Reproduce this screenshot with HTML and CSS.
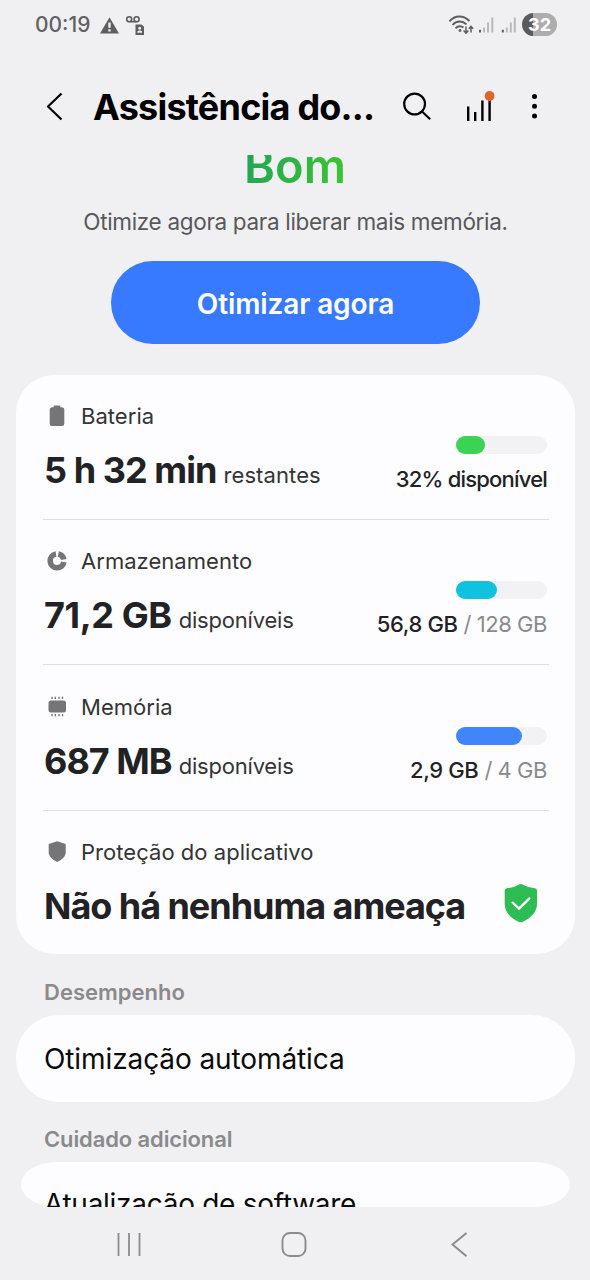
FILE: index.html
```html
<!DOCTYPE html>
<html lang="pt-BR">
<head>
<meta charset="utf-8">
<title>Assistência do dispositivo</title>
<link rel="stylesheet" href="styles.css">
</head>
<body>
<div class="screen">
  <div class="status">
    <span class="clock">00:19</span>
    <svg class="status-left" width="46" height="22" viewBox="0 0 46 22">
      <path fill="#5e5e60" fill-rule="evenodd" d="M9.5 3.2 19 19.500H0ZM8.300 8.500v5.300h2.400V8.500Zm0 6.800v2.300h2.400v-2.300Z"/>
      <g fill="none" stroke="#5e5e60" stroke-width="1.600">
        <circle cx="29.200" cy="5.200" r="2.500"/><circle cx="36.600" cy="5.200" r="2.500"/><path d="M29.200 7.700h7.400"/>
      </g>
      <path fill="#5e5e60" fill-rule="evenodd" d="M35.500 10.500h6l2.500 2.300v8.200h-8.500ZM39.700 12.800a1.500 1.500 0 1 0 .01 0ZM37.400 18.800h4.700v-.8c0-1-1-1.500-2.350-1.500s-2.350.5-2.350 1.500Z"/>
    </svg>
    <div class="status-right">
      <svg width="70" height="24" viewBox="0 0 70 24">
        <g fill="none" stroke="#5e5e60" stroke-width="1.900">
          <path d="M1.500 8.300C7 1.900 15.500 1.900 21.500 8"/><path d="M4.500 12C8.500 7.400 14.500 7.400 18.500 11.400"/><path d="M7.500 15.300C10 12.700 13 12.700 15.500 14.600"/>
        </g>
        <circle cx="12" cy="17.500" r="1.400" fill="#5e5e60"/>
        <g fill="none" stroke="#5e5e60" stroke-width="1.500"><path d="M18 13.500v6.500M15.600 17.600l2.400 2.500 2.400-2.500M23 19.500v-6M20.800 15.700 23 13.400l2.200 2.300"/></g>
        <path fill="#b9b9bb" d="M35 14.500h2V19.500h-2ZM39 9.500h2V19.500h-2ZM43.300 4.500h2V19.500h-2ZM57.800 14.500h2V19.500h-2ZM61.800 9.500h2V19.500h-2ZM65.800 4.500h2V19.500h-2Z"/>
        <path fill="#5e5e60" d="M31 16.700h2v2.800h-2ZM53.800 16.700h2v2.800h-2Z"/>
      </svg>
      <span class="charge">32</span>
    </div>
  </div>

  <header class="header">
    <svg class="back" width="18" height="30" viewBox="0 0 18 30"><path d="M15.500 1.500 2 14.500l13.500 13" fill="none" stroke="#000" stroke-width="2.200" stroke-linejoin="round"/></svg>
    <h1 class="title">Assistência do...</h1>
    <svg class="search" width="30" height="30" viewBox="0 0 30 30"><g fill="none" stroke="#000" stroke-width="2.200"><circle cx="12.600" cy="12" r="10.400"/><path d="m20 19.500 8.200 7.700"/></g></svg>
    <svg class="stats" width="30" height="32" viewBox="0 0 30 32"><path d="M3.200 16.500V31M10.200 22V31M17.400 10.500V31M24.600 8V31" stroke="#000" stroke-width="2.400"/><circle cx="24.600" cy="6" r="4.900" fill="#e0632b"/></svg>
    <svg class="more" width="8" height="28" viewBox="0 0 8 28"><circle cx="3.500" cy="3.500" r="2.500"/><circle cx="3.500" cy="13.200" r="2.500"/><circle cx="3.500" cy="22.900" r="2.500"/></svg>
  </header>

  <main class="scroll">
    <div class="grade"><span class="grade-text">Bom</span></div>
    <p class="hint">Otimize agora para liberar mais memória.</p>
    <button class="optimize">Otimizar agora</button>

    <section class="card">
      <div class="row">
        <div class="info">
          <div class="label"><svg class="icon" width="26" height="24" viewBox="0 0 26 24"><path fill="#757577" d="M10.500 1.500h5a.8.8 0 0 1 .8.800v1h1.500a2.500 2.500 0 0 1 2.500 2.500v14a2.300 2.300 0 0 1-2.300 2.300H8a2.300 2.300 0 0 1-2.300-2.300v-14a2.500 2.500 0 0 1 2.500-2.500h1.500v-1a.8.8 0 0 1 .8-.8Z"/></svg><span class="name">Bateria</span></div>
          <div class="value"><b class="amount time">5 h 32 min</b><span class="unit spread">restantes</span></div>
        </div>
        <div class="usage">
          <div class="bar"><div class="fill green" style="width:32%"></div></div>
          <div class="numbers"><span class="available">32% disponível</span></div>
        </div>
      </div>
      <div class="row">
        <div class="info">
          <div class="label"><svg class="icon" width="26" height="24" viewBox="0 0 26 24"><path d="M12 5.100A6.900 6.900 0 1 0 19.900 13M14.300 5.100A6.900 6.900 0 0 1 19.800 10.600" fill="none" stroke="#757577" stroke-width="5.600"/></svg><span class="name">Armazenamento</span></div>
          <div class="value"><b class="amount storage">71,2 GB</b><span class="unit tight">disponíveis</span></div>
        </div>
        <div class="usage">
          <div class="bar"><div class="fill cyan" style="width:45%"></div></div>
          <div class="numbers"><span class="used">56,8 GB</span><span class="total">/ 128 GB</span></div>
        </div>
      </div>
      <div class="row">
        <div class="info">
          <div class="label"><svg class="icon" width="26" height="24" viewBox="0 0 26 24"><rect x="4.500" y="5.500" width="17.500" height="12" rx="2.500" fill="#757577"/><path d="M8 1.700v2.300M11.300 1.700v2.300M15 1.700v2.300M18.500 1.700v2.300M8 19v2.300M11.300 19v2.300M15 19v2.300M18.500 19v2.300" stroke="#757577" stroke-width="1.400"/></svg><span class="name">Memória</span></div>
          <div class="value"><b class="amount memory">687 MB</b><span class="unit tight">disponíveis</span></div>
        </div>
        <div class="usage">
          <div class="bar"><div class="fill blue" style="width:72.500%"></div></div>
          <div class="numbers"><span class="used">2,9 GB</span><span class="total">/ 4 GB</span></div>
        </div>
      </div>
      <div class="row">
        <div class="info">
          <div class="label"><svg class="icon" width="26" height="24" viewBox="0 0 26 24"><path fill="#757577" d="M13.200 1.300 21.700 4v8.500c0 4-4 7.300-8.500 9.500-4.500-2.200-8.500-5.500-8.500-9.500V4Z"/></svg><span class="name">Proteção do aplicativo</span></div>
          <div class="value"><b class="amount threat">Não há nenhuma ameaça</b></div>
        </div>
        <svg class="shield" width="34" height="40" viewBox="0 0 34 40"><path fill="#2dbd52" d="M16.700 1Q18 1 19 1.700 24 4.700 31 5.300q2 .2 2 2.200V21c0 9-7.500 14.500-14 17.800q-2.300 1-4.500 0C8 35.500.7 30 .7 21V7.500q0-2 2-2.200 7-.6 12-3.600 1-.7 2-.7Z"/><path d="m8 19 7 6.700L26 14.800" fill="none" stroke="#fff" stroke-width="2.400"/></svg>
      </div>
    </section>

    <h2 class="section">Desempenho</h2>
    <div class="item">Otimização automática</div>
    <h2 class="section second">Cuidado adicional</h2>
    <div class="item clipped"><span class="update">Atualização de software</span></div>
  </main>

  <nav class="nav">
    <svg width="28" height="28" viewBox="0 0 28 28"><path d="M3.500 2v23M14 2v23M24.500 2v23" stroke="#8b8b8d" stroke-width="1.800"/></svg>
    <svg width="28" height="28" viewBox="0 0 28 28"><rect x="1.500" y="2" width="23" height="23" rx="7.500" fill="none" stroke="#8b8b8d" stroke-width="1.900"/></svg>
    <svg width="28" height="28" viewBox="0 0 28 28"><path d="M20.500 2 6.500 13.600l14 11.700" fill="none" stroke="#8b8b8d" stroke-width="1.900"/></svg>
  </nav>
</div>
</body>
</html>
```
FILE: styles.css
```css
* { box-sizing: border-box; }
body {
  margin: 0;
  background: #f0f0f2;
  font-family: Inter, "Liberation Sans", sans-serif;
  color: #222224;
}
svg { display: block; flex: none; }
h1, h2, p { margin: 0; }

.screen {
  width: 590px;
  height: 1280px;
  display: flex;
  flex-direction: column;
  overflow: hidden;
  white-space: nowrap;
}

.status {
  flex: none;
  height: 49px;
  padding: 0 33px 0 35px;
  display: flex;
  align-items: center;
}
.clock { font-size: 21px; font-weight: 500; color: #626264; width: 55px; }
.status-left { margin-left: 10px; }
.status-right { margin-left: auto; display: flex; align-items: center; gap: 4px; }
.charge {
  width: 35px;
  height: 23px;
  border-radius: 12px;
  background: linear-gradient(90deg, #5b5b5d 32%, #adadaf 32%);
  color: #fff;
  font-size: 18px;
  font-weight: 700;
  line-height: 23px;
  text-align: center;
}

.header {
  flex: none;
  height: 106px;
  padding: 10px 51px 0 46px;
  display: flex;
  align-items: center;
}
.title {
  width: 281px;
  margin-left: 29px;
  font-size: 36px;
  font-weight: 700;
  letter-spacing: -0.78px;
  color: #000;
}
.search { margin-left: 28px; }
.stats { margin: 0 0 3px 33px; }
.more { margin-left: auto; }

.scroll { flex: none; height: 1052px; overflow: hidden; }
.grade {
  margin-top: -17px;
  height: 56px;
  line-height: 56px;
  text-align: center;
}
.grade-text {
  display: inline-block;
  font-size: 47px;
  font-weight: 600;
  background: linear-gradient(100deg, #22a455, #3cc62f);
  -webkit-background-clip: text;
  background-clip: text;
  color: transparent;
}
.hint {
  margin-top: 13px;
  font-size: 22.5px;
  line-height: 30px;
  letter-spacing: -0.32px;
  text-align: center;
  padding-left: 1px;
  color: #58585a;
}
.optimize {
  display: block;
  width: 369px;
  height: 83px;
  margin: 24px auto 31px 111px;
  padding: 2px 0 0;
  border: 0;
  border-radius: 42px;
  background: #387aff;
  color: #fff;
  font: 600 28px Inter, "Liberation Sans", sans-serif;
  letter-spacing: -0.12px;
}

.card {
  height: 579px;
  margin: 0 15px 0 16px;
  padding: 0 26px 0 27px;
  border-radius: 38px;
  background: #fdfdff;
}
.row {
  height: 145.5px;
  padding: 26px 2px 0 1px;
  display: flex;
  justify-content: space-between;
  border-bottom: 1px solid #dfdfe3;
}
.row:first-child { height: 144.5px; }
.row + .row { padding-top: 26.5px; }
.row:last-child { height: 142px; border-bottom: 0; }
.label { display: flex; align-items: center; height: 30px; font-size: 22px; color: #343436; }
.icon { margin-right: 11px; }
.name { letter-spacing: 0.04px; }
.spread { letter-spacing: 0.1px; }
.value {
  margin-top: 17px;
  height: 44px;
  line-height: 44px;
  display: flex;
  align-items: baseline;
  gap: 7px;
}
.amount { font-size: 36px; font-weight: 700; }
.time { letter-spacing: -0.95px; }
.storage { letter-spacing: -0.4px; }
.memory { letter-spacing: -1px; }
.threat { letter-spacing: -1.04px; }
.unit { font-size: 22px; color: #343436; }
.tight { letter-spacing: -0.2px; }
.usage { display: flex; flex-direction: column; align-items: flex-end; gap: 13px; padding-top: 35px; }
.bar { width: 91px; height: 18px; border-radius: 9px; background: #f2f2f4; }
.fill { height: 18px; border-radius: 9px; }
.green { background: #3bd353; }
.cyan { background: #10c1e0; }
.blue { background: #4285fb; }
.numbers { display: flex; gap: 6px; font-size: 22px; line-height: 24px; }
.available { font-weight: 500; letter-spacing: -0.8px; }
.used { font-weight: 500; letter-spacing: -0.4px; }
.total { color: #8a8a8c; letter-spacing: -0.45px; }
.shield { margin: 46px 9px 0 0; }

.section {
  height: 61px;
  padding: 15px 0 0 44px;
  display: flex;
  align-items: center;
  font-size: 22px;
  font-weight: 600;
  color: #8a8a8c;
}
.second { height: 60px; padding-top: 14px; letter-spacing: -0.12px; }
.item {
  height: 87px;
  margin: 0 15px 0 16px;
  padding-left: 28px;
  border-radius: 43px;
  background: #fdfdff;
  color: #0a0a0a;
  font-size: 28px;
  line-height: 89px;
  letter-spacing: -0.1px;
}
.clipped {
  height: 45px;
  margin: 0 20px 0 21px;
  padding-left: 23px;
  border-radius: 36px / 22.5px;
  line-height: 84px;
}
.update { letter-spacing: -0.28px; }

.nav {
  flex: 1;
  padding: 2px 116px 0 115px;
  display: flex;
  align-items: center;
  justify-content: space-between;
}
```
